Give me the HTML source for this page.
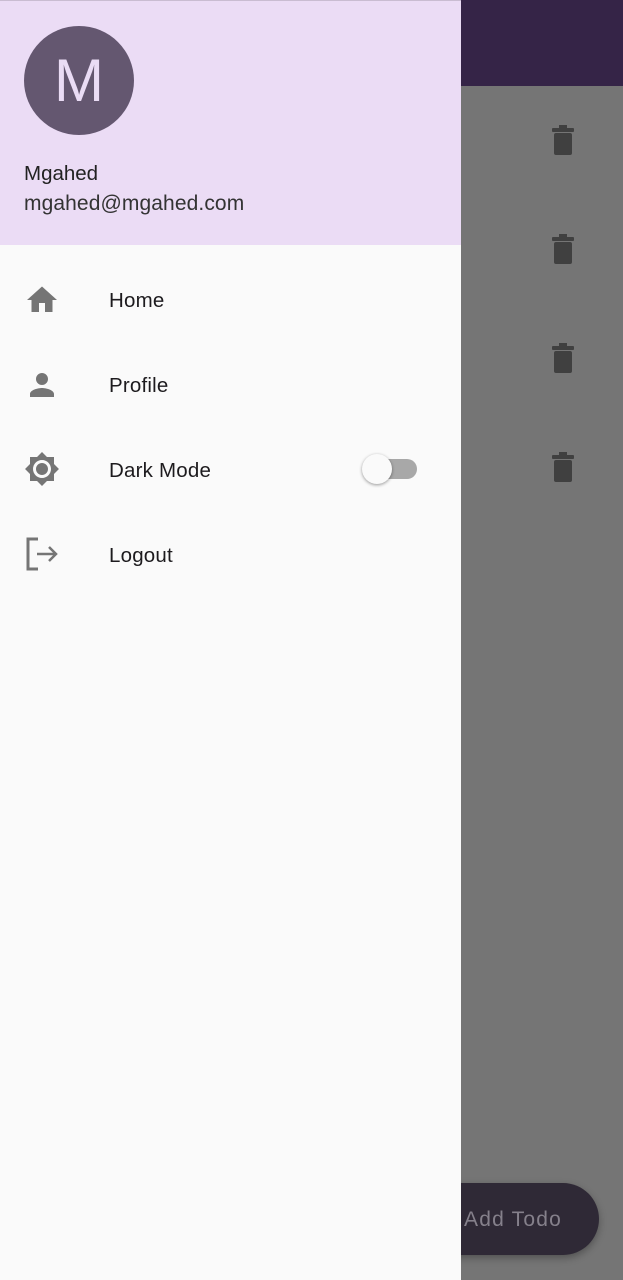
<!DOCTYPE html>
<html><head><meta charset="utf-8"><style>
body{margin:0;width:623px;height:1280px;position:relative;overflow:hidden;font-family:"Liberation Sans",sans-serif;background:#757575}
.bar{position:absolute;left:0;top:0;width:623px;height:86px;background:#352447}
.trash{position:absolute;left:552px;width:22px;height:30px}
.fab{position:absolute;left:400px;top:1183px;width:199px;height:72px;border-radius:36px;background:#2f2936;box-shadow:0 3px 8px rgba(0,0,0,.3)}
.fab span{position:absolute;left:64px;top:25px;font-size:21px;color:#85808b;letter-spacing:1.2px}
.drawer{position:absolute;left:0;top:0;width:461px;height:1280px;background:#fafafa}
.head{position:absolute;left:0;top:0;width:461px;height:245px;background:#ebdcf5;border-top:1px solid #c9bcd1;box-sizing:border-box}
.av{position:absolute;left:24px;top:25px;width:110px;height:109px;border-radius:50%;background:#645770;color:#eadcf5;font-size:60px;text-align:center;line-height:109px}
.name{position:absolute;left:24px;top:161px;font-size:20.5px;color:#222}
.mail{position:absolute;left:24px;top:191px;font-size:21px;color:#333;letter-spacing:0.1px}
.item{position:absolute;left:109px;font-size:20.5px;color:#1d1b1e;letter-spacing:0.2px}
.ic{position:absolute;left:24px;width:36px;height:36px}
</style></head><body>
<div class="bar"></div>
<svg class="trash" style="top:125px" viewBox="0 0 22 30"><rect x="0" y="3" width="22" height="4" rx="1" fill="#404040"/><rect x="7" y="0" width="8" height="4" fill="#404040"/><rect x="2" y="8" width="18" height="22" rx="2" fill="#404040"/></svg>
<svg class="trash" style="top:234px" viewBox="0 0 22 30"><rect x="0" y="3" width="22" height="4" rx="1" fill="#404040"/><rect x="7" y="0" width="8" height="4" fill="#404040"/><rect x="2" y="8" width="18" height="22" rx="2" fill="#404040"/></svg>
<svg class="trash" style="top:343px" viewBox="0 0 22 30"><rect x="0" y="3" width="22" height="4" rx="1" fill="#404040"/><rect x="7" y="0" width="8" height="4" fill="#404040"/><rect x="2" y="8" width="18" height="22" rx="2" fill="#404040"/></svg>
<svg class="trash" style="top:452px" viewBox="0 0 22 30"><rect x="0" y="3" width="22" height="4" rx="1" fill="#404040"/><rect x="7" y="0" width="8" height="4" fill="#404040"/><rect x="2" y="8" width="18" height="22" rx="2" fill="#404040"/></svg>
<div class="fab"><span>Add Todo</span></div>
<div class="drawer">
<div class="head"><div class="av">M</div><div class="name">Mgahed</div><div class="mail">mgahed@mgahed.com</div></div>
<svg class="ic" style="top:282px" viewBox="0 0 24 24"><path d="M10 20v-6h4v6h5v-8h3L12 3 2 12h3v8z" fill="#757575"/></svg>
<div class="item" style="top:289px">Home</div>
<svg class="ic" style="top:367px" viewBox="0 0 24 24"><path d="M12 12c2.2 0 4-1.8 4-4s-1.8-4-4-4-4 1.8-4 4 1.8 4 4 4zm0 2c-2.7 0-8 1.3-8 4v2h16v-2c0-2.7-5.3-4-8-4z" fill="#757575"/></svg>
<div class="item" style="top:374px">Profile</div>
<svg class="ic" style="top:451px" viewBox="0 0 24 24"><path d="M20 8.7V4h-4.7L12 .7 8.7 4H4v4.7L.7 12 4 15.3V20h4.7l3.3 3.3 3.3-3.3H20v-4.7l3.3-3.3L20 8.7zM12 18c-3.3 0-6-2.7-6-6s2.7-6 6-6 6 2.7 6 6-2.7 6-6 6zm0-10c-2.2 0-4 1.8-4 4s1.8 4 4 4 4-1.8 4-4-1.8-4-4-4z" fill="#757575"/></svg>
<div class="item" style="top:459px">Dark Mode</div>
<div style="position:absolute;left:368px;top:459px;width:49px;height:20px;border-radius:10px;background:#a8a8a8"></div>
<div style="position:absolute;left:362px;top:454px;width:30px;height:30px;border-radius:50%;background:#fafafa;box-shadow:0 1px 3px rgba(0,0,0,.4)"></div>
<svg class="ic" style="top:536px" viewBox="0 0 36 36"><path d="M14 3H4v30h10" fill="none" stroke="#757575" stroke-width="3"/><path d="M13 18h19M25 11l7 7-7 7" fill="none" stroke="#757575" stroke-width="2.5"/></svg>
<div class="item" style="top:544px">Logout</div>
</div>
</body></html>
